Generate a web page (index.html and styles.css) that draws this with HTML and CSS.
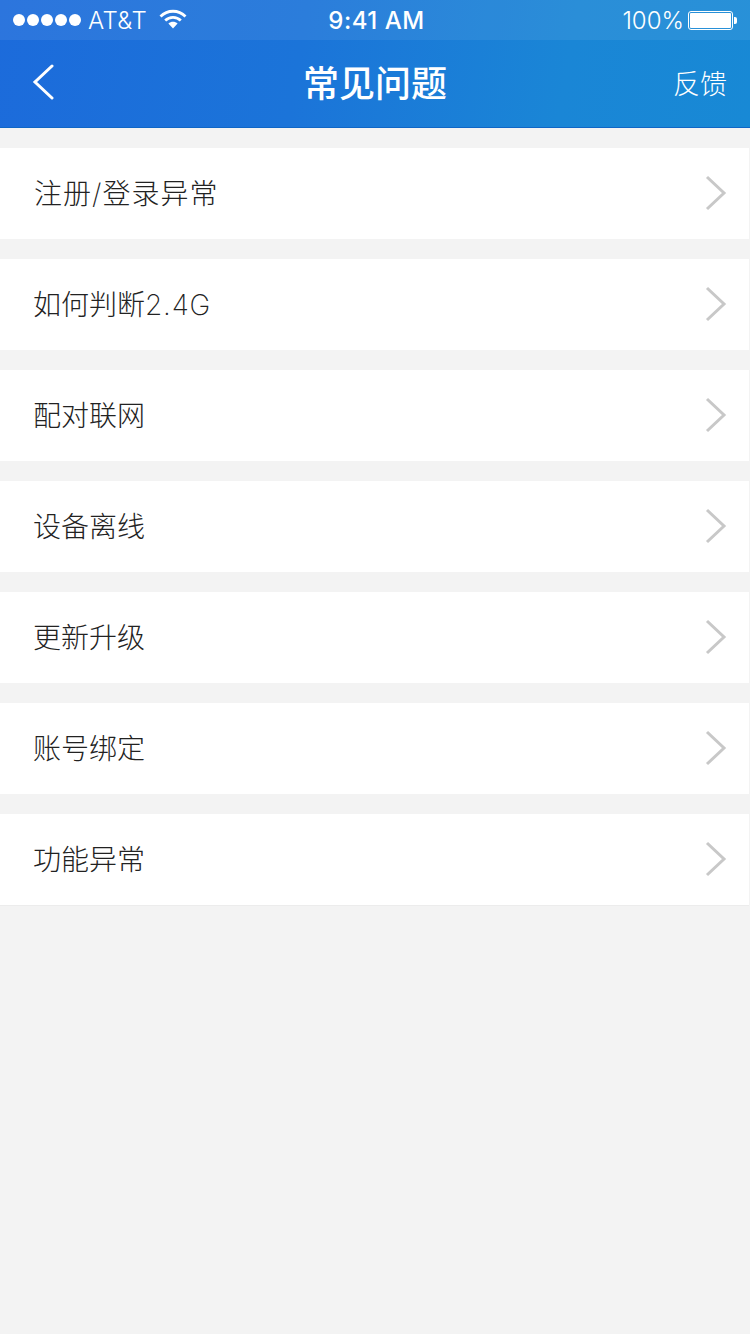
FILE: index.html
```html
<!DOCTYPE html>
<html lang="zh-CN">
<head>
    <meta charset="UTF-8">
    <meta name="viewport" content="width=device-width, initial-scale=1.0">
    <title>常见问题</title>
    <link rel="stylesheet" href="styles.css">
</head>
<body>
    <header class="header">
        <div class="status-bar">
            <div class="status-left">
                <div class="signal">
                    <span class="dot"></span><span class="dot"></span><span class="dot"></span><span class="dot"></span><span class="dot"></span>
                </div>
                <span class="carrier">AT&amp;T</span>
                <svg class="wifi" width="28" height="22" viewBox="0 0 28 22">
                    <path d="M1.5 8.5C8.5 1.5 19.5 1.5 26.5 8.5" fill="none" stroke="#fff" stroke-width="2.8"/>
                    <path d="M6.2 12.6C10.6 8.4 17.4 8.4 21.8 12.6" fill="none" stroke="#fff" stroke-width="2.8"/>
                    <path d="M9.4 15.4C12 13.2 16 13.2 18.6 15.4L14 20.4Z" fill="#fff"/>
                </svg>
            </div>
            <div class="status-time">9:41 AM</div>
            <div class="status-right">
                <span class="percent">100%</span>
                <div class="battery"><div class="battery-fill"></div></div>
                <div class="battery-tip"></div>
            </div>
        </div>
        <nav class="nav">
            <svg class="back" width="22" height="36" viewBox="0 0 22 36">
                <path d="M20 2L3 18L20 34" fill="none" stroke="#fff" stroke-width="3" stroke-linecap="round"/>
            </svg>
            <h1 class="nav-title">常见问题</h1>
            <a class="nav-action">反馈</a>
        </nav>
    </header>

    <ul class="faq-list">
        <li class="faq-row"><span class="faq-label faq-label-first">注册/登录异常</span><svg class="chevron" width="22" height="36" viewBox="0 0 22 36"><path d="M2 2L19 18L2 34" fill="none" stroke="#c8c8c8" stroke-width="3"/></svg></li>
        <li class="faq-row"><span class="faq-label">如何判断<span class="faq-latin">2.4G</span></span><svg class="chevron" width="22" height="36" viewBox="0 0 22 36"><path d="M2 2L19 18L2 34" fill="none" stroke="#c8c8c8" stroke-width="3"/></svg></li>
        <li class="faq-row"><span class="faq-label">配对联网</span><svg class="chevron" width="22" height="36" viewBox="0 0 22 36"><path d="M2 2L19 18L2 34" fill="none" stroke="#c8c8c8" stroke-width="3"/></svg></li>
        <li class="faq-row"><span class="faq-label">设备离线</span><svg class="chevron" width="22" height="36" viewBox="0 0 22 36"><path d="M2 2L19 18L2 34" fill="none" stroke="#c8c8c8" stroke-width="3"/></svg></li>
        <li class="faq-row"><span class="faq-label">更新升级</span><svg class="chevron" width="22" height="36" viewBox="0 0 22 36"><path d="M2 2L19 18L2 34" fill="none" stroke="#c8c8c8" stroke-width="3"/></svg></li>
        <li class="faq-row"><span class="faq-label">账号绑定</span><svg class="chevron" width="22" height="36" viewBox="0 0 22 36"><path d="M2 2L19 18L2 34" fill="none" stroke="#c8c8c8" stroke-width="3"/></svg></li>
        <li class="faq-row faq-row-last"><span class="faq-label">功能异常</span><svg class="chevron" width="22" height="36" viewBox="0 0 22 36"><path d="M2 2L19 18L2 34" fill="none" stroke="#c8c8c8" stroke-width="3"/></svg></li>
    </ul>
</body>
</html>
```

FILE: styles.css
```css
* {
    box-sizing: border-box;
}
html, body {
    height: 100%;
}
body {
    margin: 0;
    background-color: #f3f3f3;
    font-family: "Noto Sans CJK SC", "Noto Sans", sans-serif;
    overflow: hidden;
}
.header {
    height: 128px;
    color: white;
    background: linear-gradient(100deg, #1c6bdb 0%, #1b74d9 40%, #1a86d6 75%, #1889d5 100%);
    border-bottom: 1px solid #0f66c6;
}
.status-bar {
    height: 40px;
    padding: 0 12px 0 13px;
    display: grid;
    grid-template-columns: 1fr auto 1fr;
    align-items: center;
    background-color: rgba(255,255,255,0.07);
    font-family: Inter, "Liberation Sans", sans-serif;
    font-size: 24px;
}
.status-left {
    display: flex;
    align-items: center;
}
.signal {
    display: flex;
    gap: 2px;
}
.dot {
    width: 12px;
    height: 12px;
    border-radius: 50%;
    background-color: white;
}
.carrier {
    margin-left: 7px;
    font-weight: 300;
    font-size: 24px;
    letter-spacing: 0.4px;
}
.wifi {
    margin-left: 12px;
    margin-top: -2px;
}
.status-time {
    font-weight: 500;
    font-size: 24px;
    letter-spacing: 0.5px;
    padding-left: 2px;
}
.status-right {
    display: flex;
    align-items: center;
    justify-content: flex-end;
    padding-right: 1px;
}
.percent {
    font-weight: 300;
    font-size: 24px;
    margin-right: 4px;
}
.battery {
    width: 45px;
    height: 19px;
    border: 1px solid white;
    border-radius: 3px;
    padding: 1px;
}
.battery-fill {
    height: 100%;
    background-color: white;
    border-radius: 1px;
}
.battery-tip {
    width: 3px;
    height: 7px;
    margin-left: 1px;
    background-color: white;
    border-radius: 0 2px 2px 0;
}
.nav {
    height: 87px;
    position: relative;
    display: flex;
    align-items: center;
    justify-content: space-between;
    padding: 0 23px 3px 32px;
}
.nav-title {
    position: absolute;
    left: 0;
    right: 0;
    margin: 0;
    padding-bottom: 3px;
    text-align: center;
    font-size: 36px;
    font-weight: 500;
    pointer-events: none;
}
.nav-action {
    font-size: 27px;
    font-weight: 200;
}
.faq-list {
    list-style: none;
    margin: 0;
    padding: 20px 1px 0 0;
    display: flex;
    flex-direction: column;
    gap: 20px;
}
.faq-row {
    height: 91px;
    padding: 0 22px 0 33px;
    display: flex;
    align-items: center;
    justify-content: space-between;
    background-color: white;
}
.faq-row-last {
    height: 92px;
    border-bottom: 1px solid #ececec;
}
.faq-label {
    font-family: Inter, "Noto Sans CJK SC", sans-serif;
    font-size: 28px;
    font-weight: 200;
    color: #222;
    margin-bottom: 4px;
}
.faq-label-first {
    padding-left: 1px;
    letter-spacing: 1px;
}
.faq-latin {
    letter-spacing: 0.8px;
}
.chevron {
    margin-bottom: 1px;
}
```
